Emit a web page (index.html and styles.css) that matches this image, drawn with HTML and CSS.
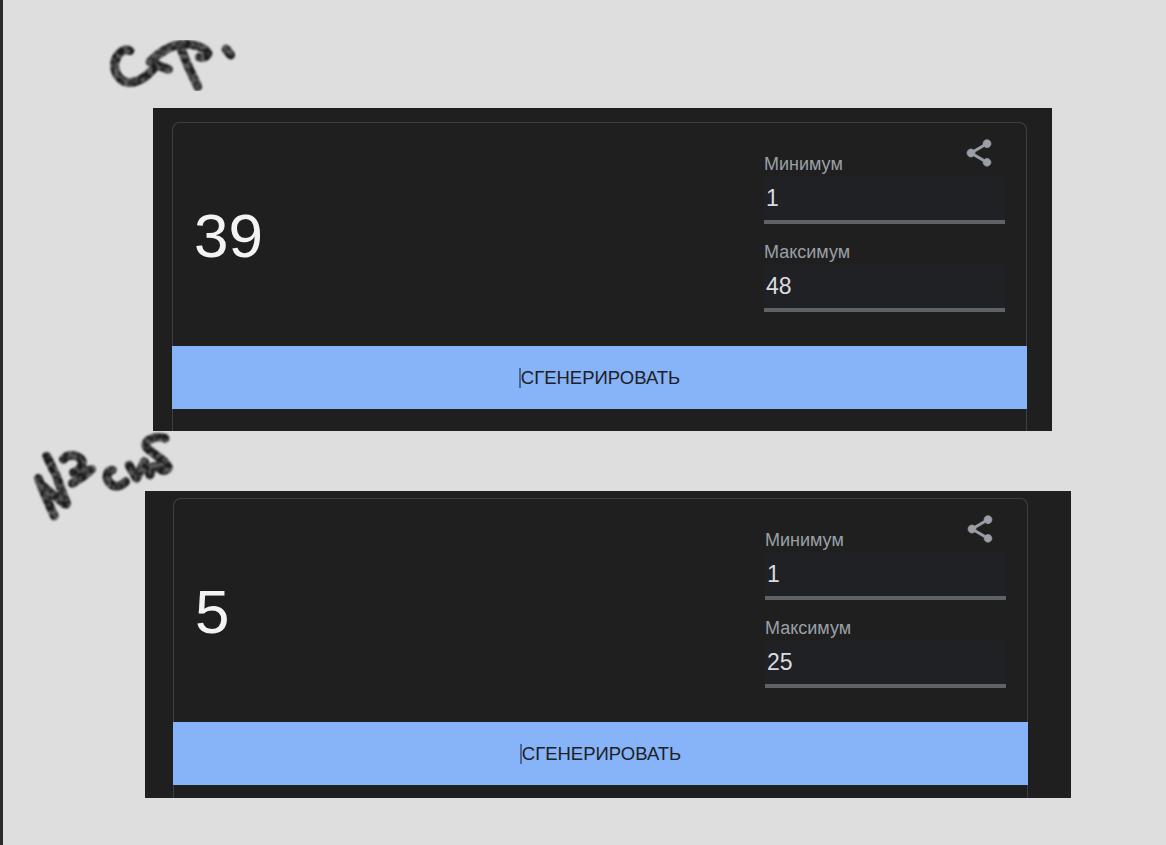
FILE: index.html
```html
<!DOCTYPE html>
<html lang="ru">
<head>
    <meta charset="UTF-8">
    <meta name="viewport" content="width=device-width, initial-scale=1.0">
    <title>Генератор случайных чисел</title>
    <link rel="stylesheet" href="styles.css">
</head>
<body>
    <!-- handwritten pen notes on top of the screenshot -->
    <svg class="ink ink-top" viewBox="0 0 420 195" role="img" aria-label="стр.">
        <defs>
            <filter id="ink-grain" x="-10%" y="-10%" width="120%" height="120%" color-interpolation-filters="sRGB">
                <feTurbulence type="fractalNoise" baseFrequency="0.07" numOctaves="2" seed="4" result="noise"/>
                <feColorMatrix in="noise" type="matrix" values="0 0 0 0 0.1  0 0 0 0 0.1  0 0 0 0 0.1  4.5 0 0 0 -1.7" result="grain"/>
                <feComposite in="grain" in2="SourceAlpha" operator="in" result="spots"/>
                <feMerge result="merged">
                    <feMergeNode in="SourceGraphic"/>
                    <feMergeNode in="spots"/>
                </feMerge>
                <feGaussianBlur in="merged" stdDeviation="2.6"/>
            </filter>
        </defs>
        <g class="ink-stroke" filter="url(#ink-grain)">
            <path d="M90 47 C68 38 48 60 44 85 C42 115 60 142 90 143 C125 140 150 115 165 95"/>
            <path d="M150 80 C175 55 205 32 245 28 C285 26 320 40 324 55 C322 66 308 70 298 66"/>
            <path d="M166 88 L205 103"/>
            <path d="M240 35 L265 95 L293 155"/>
            <path d="M378 42 L392 60"/>
        </g>
    </svg>
    <svg class="ink ink-bottom" viewBox="0 0 480 285" role="img" aria-label="№3 стр5">
        <g class="ink-stroke" filter="url(#ink-grain)">
            <path d="M40 145 L62 200 L88 258"/>
            <path d="M65 78 L95 140 L125 222"/>
            <path d="M50 165 L85 195 L118 222"/>
            <path d="M115 88 C130 68 165 75 172 95 C172 112 158 122 145 128 C165 128 185 122 200 118 C185 135 160 148 142 160"/>
            <path d="M262 120 C245 122 240 145 255 160 C270 175 290 168 302 155"/>
            <path d="M312 105 L335 145 L358 95 L375 135 L385 110"/>
            <path d="M420 25 C395 15 360 28 362 48 C375 70 425 90 430 112 C425 128 405 122 395 108"/>
        </g>
    </svg>

    <section class="panel panel-first">
        <div class="card">
            <div class="card-top">
                <div class="result">39</div>
                <div class="fields">
                    <label class="field">
                        <span class="field-label">Минимум</span>
                        <input class="field-input" type="text" value="1">
                    </label>
                    <label class="field">
                        <span class="field-label">Максимум</span>
                        <input class="field-input" type="text" value="48">
                    </label>
                </div>
                <svg class="share" viewBox="0 0 24 24"><path d="M18 16.08c-.76 0-1.44.3-1.96.77L8.91 12.7c.05-.23.09-.46.09-.7s-.04-.47-.09-.7l7.05-4.11c.54.5 1.25.81 2.04.81 1.66 0 3-1.34 3-3s-1.34-3-3-3-3 1.34-3 3c0 .24.04.47.09.7L8.04 9.81C7.5 9.31 6.79 9 6 9c-1.66 0-3 1.34-3 3s1.34 3 3 3c.79 0 1.5-.31 2.04-.81l7.12 4.16c-.05.21-.08.43-.08.65 0 1.61 1.31 2.92 2.92 2.92 1.61 0 2.92-1.31 2.92-2.92s-1.31-2.92-2.92-2.92z"/></svg>
            </div>
            <button class="generate"><span class="generate-text">СГЕНЕРИРОВАТЬ</span></button>
        </div>
    </section>

    <section class="panel panel-second">
        <div class="card">
            <div class="card-top">
                <div class="result">5</div>
                <div class="fields">
                    <label class="field">
                        <span class="field-label">Минимум</span>
                        <input class="field-input" type="text" value="1">
                    </label>
                    <label class="field">
                        <span class="field-label">Максимум</span>
                        <input class="field-input" type="text" value="25">
                    </label>
                </div>
                <svg class="share" viewBox="0 0 24 24"><path d="M18 16.08c-.76 0-1.44.3-1.96.77L8.91 12.7c.05-.23.09-.46.09-.7s-.04-.47-.09-.7l7.05-4.11c.54.5 1.25.81 2.04.81 1.66 0 3-1.34 3-3s-1.34-3-3-3-3 1.34-3 3c0 .24.04.47.09.7L8.04 9.81C7.5 9.31 6.79 9 6 9c-1.66 0-3 1.34-3 3s1.34 3 3 3c.79 0 1.5-.31 2.04-.81l7.12 4.16c-.05.21-.08.43-.08.65 0 1.61 1.31 2.92 2.92 2.92 1.61 0 2.92-1.31 2.92-2.92s-1.31-2.92-2.92-2.92z"/></svg>
            </div>
            <button class="generate"><span class="generate-text">СГЕНЕРИРОВАТЬ</span></button>
        </div>
    </section>
</body>
</html>
```

FILE: styles.css
```css
:root {
    --page-color: #dedede;
    --panel-color: #1f1f1f;
    --line-color: #3c4043;
    --input-color: #202124;
    --accent-color: #87b3f9;
    --muted-color: #9aa0a6;
}

* {
    margin: 0;
    padding: 0;
    box-sizing: border-box;
    font-family: "Liberation Sans", Arial, sans-serif;
}

body {
    background: var(--page-color);
    border-left: 3px solid #2b2b2b;
    min-height: 100vh;
    padding-top: 108px;
}

.ink {
    position: absolute;
    z-index: 1;
}

.ink-top {
    left: 100px;
    top: 35px;
    width: 140px;
    height: 65px;
}

.ink-bottom {
    left: 25px;
    top: 430px;
    width: 160px;
    height: 95px;
}

.ink-stroke {
    fill: none;
    stroke: #5a5a5a;
    stroke-width: 26;
    stroke-linecap: round;
    stroke-linejoin: round;
}

.panel {
    background: var(--panel-color);
    overflow: hidden;
}

.panel-first {
    margin-left: 150px;
    width: 899px;
    height: 323px;
    padding: 14px 25px 0 19px;
}

.panel-second {
    margin-top: 60px;
    margin-left: 142px;
    width: 926px;
    height: 307px;
    padding: 7px 43px 0 28px;
}

.card {
    border: 1px solid var(--line-color);
    border-bottom: none;
    border-radius: 8px 8px 0 0;
    height: 400px;
}

.card-top {
    position: relative;
    display: flex;
    align-items: center;
    justify-content: space-between;
    height: 223px;
    padding: 0 21px;
}

.result {
    color: #f1f3f4;
    font-size: 62px;
    line-height: 72px;
    margin-top: 3px;
}

.fields {
    display: flex;
    flex-direction: column;
    gap: 18px;
    width: 241px;
    align-self: flex-start;
    padding-top: 31px;
}

.field {
    display: block;
}

.field-label {
    display: block;
    color: var(--muted-color);
    font-size: 18px;
    line-height: 20px;
    margin-bottom: 3px;
}

.field-input {
    display: block;
    width: 100%;
    height: 47px;
    background: var(--input-color);
    border: none;
    border-bottom: 4px solid #5f6368;
    color: #dadce0;
    font-size: 23px;
    padding: 0 2px;
    outline: none;
}

.share {
    position: absolute;
    top: 14px;
    right: 31px;
    width: 32px;
    height: 32px;
    fill: var(--muted-color);
    stroke: var(--muted-color);
    stroke-width: 0.5;
}

.generate {
    display: flex;
    justify-content: center;
    align-items: center;
    width: calc(100% + 2px);
    height: 63px;
    margin-left: -1px;
    background: var(--accent-color);
    border: none;
    color: #202124;
    font-size: 18.5px;
}

.generate-text {
    border-left: 2px solid #4a6796;
    line-height: 20px;
}
```
